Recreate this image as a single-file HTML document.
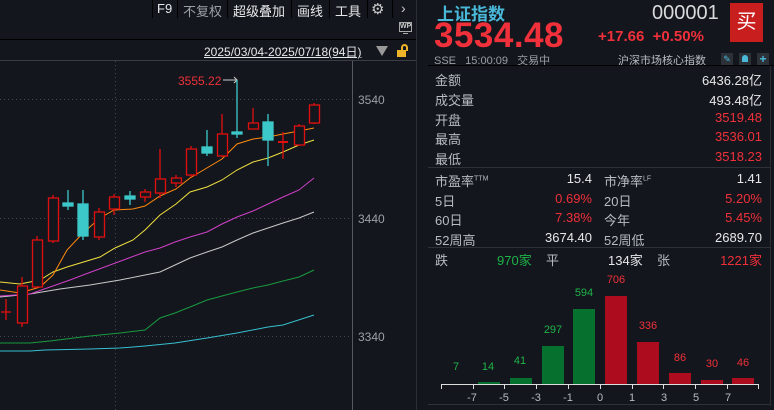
<!DOCTYPE html>
<html><head><meta charset="utf-8"><style>
*{margin:0;padding:0;box-sizing:border-box}
body{width:774px;height:410px;background:#13161c;overflow:hidden;position:relative;font-family:"Liberation Sans","Noto Sans CJK SC",sans-serif;color:#c8ccd2}
.a{position:absolute;white-space:nowrap}
.r{color:#f0303a}.g{color:#1fb34a}.w{color:#e6e8ea}
.lab{font-size:13px;color:#b8bcc2}
</style></head><body>
<!-- toolbar -->
<div class="a" style="left:152px;top:0;width:0;height:18px;border-left:1px solid #000"></div>
<div class="a w" style="left:157px;top:1px;font-size:13px">F9</div>
<div class="a" style="left:177px;top:0;height:18px;border-left:1px solid #000"></div>
<div class="a" style="left:183px;top:1px;font-size:13px;color:#9aa0a6">不复权</div>
<div class="a" style="left:227px;top:0;height:18px;border-left:1px solid #000"></div>
<div class="a w" style="left:233px;top:1px;font-size:13px">超级叠加</div>
<div class="a" style="left:291px;top:0;height:18px;border-left:1px solid #000"></div>
<div class="a w" style="left:297px;top:1px;font-size:13px">画线</div>
<div class="a" style="left:329px;top:0;height:18px;border-left:1px solid #000"></div>
<div class="a w" style="left:335px;top:1px;font-size:13px">工具</div>
<div class="a" style="left:367px;top:0;height:18px;border-left:1px solid #000"></div>
<div class="a" style="left:371px;top:0;font-size:15px;color:#ccc">⚙</div>
<div class="a" style="left:392px;top:0;height:18px;border-left:1px solid #000"></div>
<div class="a" style="left:401px;top:0;font-size:14px;color:#ccc">›</div>
<div class="a" style="left:0;top:39px;width:416px;height:1px;background:#000"></div>
<div class="a" style="left:399px;top:22px;width:13px;height:10px;border:1px solid #aaa;font-size:7px;line-height:8px;text-align:center;color:#ccc;font-weight:bold">WP</div>
<div class="a" style="left:403px;top:33px;width:5px;height:1px;background:#aaa"></div>
<div class="a w" style="left:204px;top:43px;font-size:12px;text-decoration:underline">2025/03/04-2025/07/18(94日)</div>
<div class="a" style="left:376px;top:46px;width:0;height:0;border-left:6px solid transparent;border-right:6px solid transparent;border-top:10px solid #999"></div>
<div class="a" style="left:397px;top:50px;width:9px;height:7px;background:#f0b429"></div>
<div class="a" style="left:400px;top:44px;width:7px;height:7px;border:2px solid #f0b429;border-bottom:none;border-radius:4px 4px 0 0;left:401px"></div>
<div class="a" style="left:0;top:60px;width:416px;height:1px;background:#3a3d42"></div>
<!-- chart -->
<svg class="a" style="left:0;top:61px" width="416" height="349" viewBox="0 61 416 349">
<g stroke="#444a52" stroke-dasharray="1,3" stroke-width="1">
<line x1="0" y1="99.5" x2="352" y2="99.5"/><line x1="0" y1="218.5" x2="352" y2="218.5"/><line x1="0" y1="336.5" x2="352" y2="336.5"/>
<line x1="115.5" y1="61" x2="115.5" y2="410"/></g>
<line x1="352.5" y1="61" x2="352.5" y2="410" stroke="#555a60"/>
<g font-size="12" fill="#9aa0a6"><text x="358" y="104">3540</text><text x="358" y="223">3440</text><text x="358" y="341">3340</text></g>
<text x="178" y="85" font-size="12" fill="#f0303a">3555.22</text>
<polyline points="223,80 237,80" stroke="#ccc" fill="none"/><polyline points="234,77 237,80 234,83" stroke="#ccc" fill="none"/>
<g fill="none" stroke-width="1">
<polyline stroke="#37c0d0" points="0,351 30,351 45,350 90,349 120,348 145,346 175,343 207,338 237,333 268,327 283,325 314,315"/>
<polyline stroke="#1a9a40" points="0,343 30,343 50,341 90,336 120,333 145,330 160,318 175,313 190,307 207,300 222,296 237,292 253,288 268,285 283,281 299,277 314,270"/>
<polyline stroke="#c8c8c8" points="0,297 30,294 60,289 90,285 120,280 145,275 160,272 175,265 190,258 207,252 222,247 237,240 253,233 268,228 283,223 299,218 314,212"/>
<polyline stroke="#d040c8" points="0,296 30,294 50,287 70,280 83,275 110,265 145,252 160,248 175,242 190,237 207,232 222,224 237,217 253,211 268,204 283,197 299,190 314,178"/>
<polyline stroke="#f0e040" points="0,282 20,284 40,280 53,272 67,267 100,257 115,248 133,240 145,230 160,215 176,204 190,192 207,187 222,180 237,170 253,162 268,158 283,152 299,145 314,140"/>
<polyline stroke="#ff8a10" points="0,290 20,293 40,287 53,275 67,250 83,233 100,218 114,210 133,209 145,206 160,196 176,189 190,178 222,159 237,144 253,139 268,137 283,134 299,131 314,128"/>
</g>
<g stroke="#e01010" fill="none" stroke-width="1.3">
<line x1="6" y1="299" x2="6" y2="320"/><line x1="1" y1="312" x2="11" y2="312"/>
<line x1="22" y1="277" x2="22" y2="327"/><rect x="17.5" y="286" width="10" height="37" fill="#13161c"/>
<line x1="37" y1="236" x2="37" y2="287"/><rect x="32.5" y="240" width="10" height="47" fill="#13161c"/>
<line x1="53" y1="195" x2="53" y2="243"/><rect x="48.5" y="198" width="10" height="43" fill="#13161c"/>
<line x1="99" y1="208" x2="99" y2="240"/><rect x="94.5" y="212" width="10" height="25" fill="#13161c"/>
<line x1="114" y1="194" x2="114" y2="215"/><rect x="109.5" y="197" width="10" height="12" fill="#13161c"/>
<line x1="145" y1="189" x2="145" y2="202"/><rect x="140.5" y="192" width="10" height="5" fill="#13161c"/>
<line x1="160" y1="149" x2="160" y2="198"/><rect x="155.5" y="179" width="10" height="14" fill="#13161c"/>
<line x1="176" y1="175" x2="176" y2="187"/><rect x="171.5" y="178" width="10" height="5" fill="#13161c"/>
<line x1="191" y1="146" x2="191" y2="177"/><rect x="186.5" y="149" width="10" height="26" fill="#13161c"/>
<line x1="222" y1="114" x2="222" y2="157"/><rect x="217.5" y="134" width="10" height="22" fill="#13161c"/>
<line x1="253" y1="108" x2="253" y2="123"/><rect x="248.5" y="123" width="10" height="6" fill="#13161c"/>
<line x1="283" y1="132" x2="283" y2="159"/><line x1="278" y1="142" x2="288" y2="142" stroke-width="2"/>
<line x1="299" y1="124" x2="299" y2="146"/><rect x="294.5" y="126" width="10" height="19" fill="#13161c"/>
<line x1="314" y1="103" x2="314" y2="124"/><rect x="309.5" y="105" width="10" height="18" fill="#13161c"/>
</g>
<g stroke="#3cc8c8" fill="#3cc8c8" stroke-width="1.3">
<line x1="68" y1="190" x2="68" y2="210"/><rect x="63" y="203" width="10" height="3"/>
<line x1="83" y1="190" x2="83" y2="240"/><rect x="78" y="204" width="10" height="32"/>
<line x1="130" y1="191" x2="130" y2="205"/><rect x="125" y="196" width="10" height="3"/>
<line x1="207" y1="130" x2="207" y2="156"/><rect x="202" y="147" width="10" height="6"/>
<line x1="237" y1="80" x2="237" y2="138"/><rect x="232" y="132" width="10" height="2"/>
<line x1="268" y1="114" x2="268" y2="166"/><rect x="263" y="122" width="10" height="18"/>
</g>
</svg>
<!-- right panel -->
<div class="a" style="left:416px;top:0;width:1px;height:410px;background:#2a2d32"></div>
<div class="a" style="left:437px;top:0px;font-size:17px;font-weight:bold;color:#4ab8d8">上证指数</div>
<div class="a r" style="left:434px;top:16px;font-size:35px;font-weight:bold;letter-spacing:0.5px">3534.48</div>
<div class="a" style="left:652px;top:2px;font-size:20px;color:#d8dadc">000001</div>
<div class="a" style="left:730px;top:3px;width:33px;height:39px;background:#c81e1e;color:#fff;font-size:20px;text-align:center;line-height:39px">买</div>
<div class="a r" style="left:598px;top:28px;font-size:15px;font-weight:bold">+17.66&nbsp;&nbsp;+0.50%</div>
<div class="a" style="left:434px;top:52px;font-size:11px;color:#9aa0a6">SSE&nbsp;&nbsp;&nbsp;15:00:09&nbsp;&nbsp;&nbsp;交易中</div>
<div class="a" style="left:618px;top:52px;font-size:11px;color:#b8bcc2">沪深市场核心指数</div>
<div class="a" style="left:721px;top:53px;width:12px;height:12px;background:#2c3138;color:#4ab8d8;font-size:9px;text-align:center;line-height:12px">✎</div>
<div class="a" style="left:739px;top:53px;width:12px;height:12px;background:#2c3138"><div style="margin:2px 3px;width:6px;height:7px;background:#4ab8d8;border-radius:3px 3px 0 0"></div></div>
<div class="a" style="left:757px;top:53px;width:12px;height:12px;background:#2c3138;color:#4ab8d8;font-size:12px;text-align:center;line-height:12px;font-weight:bold">+</div>
<div class="a" style="left:428px;top:65px;width:346px;height:1px;background:#000"></div>
<div class="a" style="left:770px;top:66px;width:1px;height:340px;background:#2a2d32"></div>
<div class="a lab" style="left:435px;top:70px">金额</div><div class="a w" style="right:12px;top:70px;font-size:13px">6436.28亿</div>
<div class="a lab" style="left:435px;top:90px">成交量</div><div class="a w" style="right:12px;top:90px;font-size:13px">493.48亿</div>
<div class="a lab" style="left:435px;top:110px">开盘</div><div class="a r" style="right:12px;top:110px;font-size:13px">3519.48</div>
<div class="a lab" style="left:435px;top:129px">最高</div><div class="a r" style="right:12px;top:129px;font-size:13px">3536.01</div>
<div class="a lab" style="left:435px;top:149px">最低</div><div class="a r" style="right:12px;top:149px;font-size:13px">3518.23</div>
<div class="a" style="left:428px;top:167px;width:342px;height:1px;background:#2e3136"></div>
<div class="a lab" style="left:435px;top:171px">市盈率<sup style="font-size:7px">TTM</sup></div><div class="a w" style="left:512px;top:171px;width:80px;text-align:right;font-size:13px">15.4</div>
<div class="a lab" style="left:604px;top:171px">市净率<sup style="font-size:7px">LF</sup></div><div class="a w" style="right:12px;top:171px;font-size:13px">1.41</div>
<div class="a lab" style="left:435px;top:191px">5日</div><div class="a r" style="left:512px;top:191px;width:80px;text-align:right;font-size:13px">0.69%</div>
<div class="a lab" style="left:604px;top:191px">20日</div><div class="a r" style="right:12px;top:191px;font-size:13px">5.20%</div>
<div class="a lab" style="left:435px;top:210px">60日</div><div class="a r" style="left:512px;top:210px;width:80px;text-align:right;font-size:13px">7.38%</div>
<div class="a lab" style="left:604px;top:210px">今年</div><div class="a r" style="right:12px;top:210px;font-size:13px">5.45%</div>
<div class="a lab" style="left:435px;top:230px">52周高</div><div class="a w" style="left:512px;top:230px;width:80px;text-align:right;font-size:13px">3674.40</div>
<div class="a lab" style="left:604px;top:230px">52周低</div><div class="a w" style="right:12px;top:230px;font-size:13px">2689.70</div>
<div class="a" style="left:428px;top:247px;width:342px;height:1px;background:#2e3136"></div>
<div class="a lab" style="left:435px;top:250px">跌</div><div class="a g" style="left:497px;top:250px;font-size:13px">970家</div>
<div class="a lab" style="left:546px;top:250px">平</div><div class="a w" style="left:608px;top:250px;font-size:13px">134家</div>
<div class="a lab" style="left:657px;top:250px">张</div><div class="a r" style="right:12px;top:250px;font-size:13px">1221家</div>
<svg class="a" style="left:420px;top:270px" width="354" height="140" viewBox="420 270 354 140">
<g fill="#06712f"><rect x="478" y="382" width="22" height="2"/><rect x="510" y="378" width="22" height="6"/><rect x="542" y="346" width="22" height="38"/><rect x="573" y="309" width="22" height="75"/></g>
<g fill="#ad0c1e"><rect x="605" y="296" width="22" height="88"/><rect x="637" y="342" width="22" height="42"/><rect x="669" y="373" width="22" height="11"/><rect x="701" y="380" width="22" height="4"/><rect x="732" y="378" width="22" height="6"/></g>
<line x1="441" y1="384.5" x2="759" y2="384.5" stroke="#ddd"/>
<g stroke="#ddd"><line x1="441.5" y1="384" x2="441.5" y2="389"/><line x1="473.5" y1="384" x2="473.5" y2="389"/><line x1="504.5" y1="384" x2="504.5" y2="389"/><line x1="536.5" y1="384" x2="536.5" y2="389"/><line x1="568.5" y1="384" x2="568.5" y2="389"/><line x1="600.5" y1="384" x2="600.5" y2="389"/><line x1="632.5" y1="384" x2="632.5" y2="389"/><line x1="663.5" y1="384" x2="663.5" y2="389"/><line x1="695.5" y1="384" x2="695.5" y2="389"/><line x1="727.5" y1="384" x2="727.5" y2="389"/><line x1="758.5" y1="384" x2="758.5" y2="389"/></g>
<g font-size="11" fill="#b8bcc2" text-anchor="middle"><text x="472" y="401">-7</text><text x="504" y="401">-5</text><text x="536" y="401">-3</text><text x="568" y="401">-1</text><text x="600" y="401">0</text><text x="632" y="401">1</text><text x="664" y="401">3</text><text x="696" y="401">5</text><text x="728" y="401">7</text></g>
<g font-size="11" text-anchor="middle" fill="#1fb34a"><text x="456" y="370">7</text><text x="488" y="370">14</text><text x="520" y="364">41</text><text x="553" y="333">297</text><text x="584" y="296">594</text></g>
<g font-size="11" text-anchor="middle" fill="#f0303a"><text x="616" y="283">706</text><text x="648" y="329">336</text><text x="680" y="361">86</text><text x="712" y="367">30</text><text x="743" y="366">46</text></g>
<line x1="428" y1="404.5" x2="770" y2="404.5" stroke="#2e3136"/>
</svg>
</body></html>
